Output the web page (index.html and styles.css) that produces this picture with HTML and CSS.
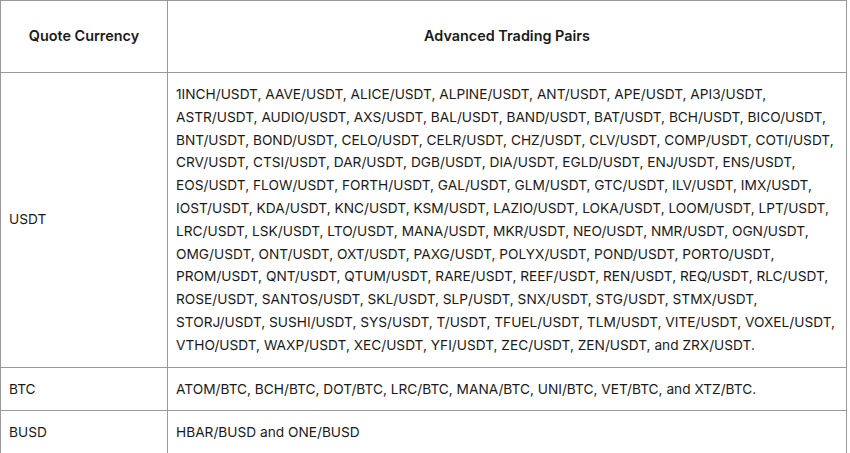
FILE: index.html
```html
<!DOCTYPE html>
<html>
<head>
<meta charset="utf-8">
<link rel="stylesheet" href="styles.css">
</head>
<body>
<table class="pairs">
  <thead>
    <tr>
      <th class="col-quote">Quote Currency</th>
      <th class="col-pairs">Advanced Trading Pairs</th>
    </tr>
  </thead>
  <tbody>
    <tr>
      <td>USDT</td>
      <td>1INCH/USDT, AAVE/USDT, ALICE/USDT, ALPINE/USDT, ANT/USDT, APE/USDT, API3/USDT, ASTR/USDT, AUDIO/USDT, AXS/USDT, BAL/USDT, BAND/USDT, BAT/USDT, BCH/USDT, BICO/USDT, BNT/USDT, BOND/USDT, CELO/USDT, CELR/USDT, CHZ/USDT, CLV/USDT, COMP/USDT, COTI/USDT, CRV/USDT, CTSI/USDT, DAR/USDT, DGB/USDT, DIA/USDT, EGLD/USDT, ENJ/USDT, ENS/USDT, EOS/USDT, FLOW/USDT, FORTH/USDT, GAL/USDT, GLM/USDT, GTC/USDT, ILV/USDT, IMX/USDT, IOST/USDT, KDA/USDT, KNC/USDT, KSM/USDT, LAZIO/USDT, LOKA/USDT, LOOM/USDT, LPT/USDT, LRC/USDT, LSK/USDT, LTO/USDT, MANA/USDT, MKR/USDT, NEO/USDT, NMR/USDT, OGN/USDT, OMG/USDT, ONT/USDT, OXT/USDT, PAXG/USDT, POLYX/USDT, POND/USDT, PORTO/USDT, PROM/USDT, QNT/USDT, QTUM/USDT, RARE/USDT, REEF/USDT, REN/USDT, REQ/USDT, RLC/USDT, ROSE/USDT, SANTOS/USDT, SKL/USDT, SLP/USDT, SNX/USDT, STG/USDT, STMX/USDT, STORJ/USDT, SUSHI/USDT, SYS/USDT, T/USDT, TFUEL/USDT, TLM/USDT, VITE/USDT, VOXEL/USDT, VTHO/USDT, WAXP/USDT, XEC/USDT, YFI/USDT, ZEC/USDT, ZEN/USDT, and ZRX/USDT.</td>
    </tr>
    <tr>
      <td>BTC</td>
      <td>ATOM/BTC, BCH/BTC, DOT/BTC, LRC/BTC, MANA/BTC, UNI/BTC, VET/BTC, and XTZ/BTC.</td>
    </tr>
    <tr>
      <td>BUSD</td>
      <td>HBAR/BUSD and ONE/BUSD</td>
    </tr>
  </tbody>
</table>
</body>
</html>
```

FILE: styles.css
```css
html, body {
  margin: 0;
  padding: 0;
  background: #fff;
}
body {
  font-family: Inter, "Noto Sans", sans-serif;
  font-size: 13.7px;
  color: #1a1a1a;
}
.pairs {
  width: 847px;
  border-collapse: collapse;
  table-layout: fixed;
}
.pairs th,
.pairs td {
  border: 1px solid #9a9a9a;
  text-align: left;
  vertical-align: middle;
  padding: 10px 8px;
  line-height: 22.8px;
}
.pairs th {
  font-size: 14.4px;
  font-weight: 600;
  text-align: center;
  height: 51px;
}
.col-quote {
  width: 150px;
}
```
